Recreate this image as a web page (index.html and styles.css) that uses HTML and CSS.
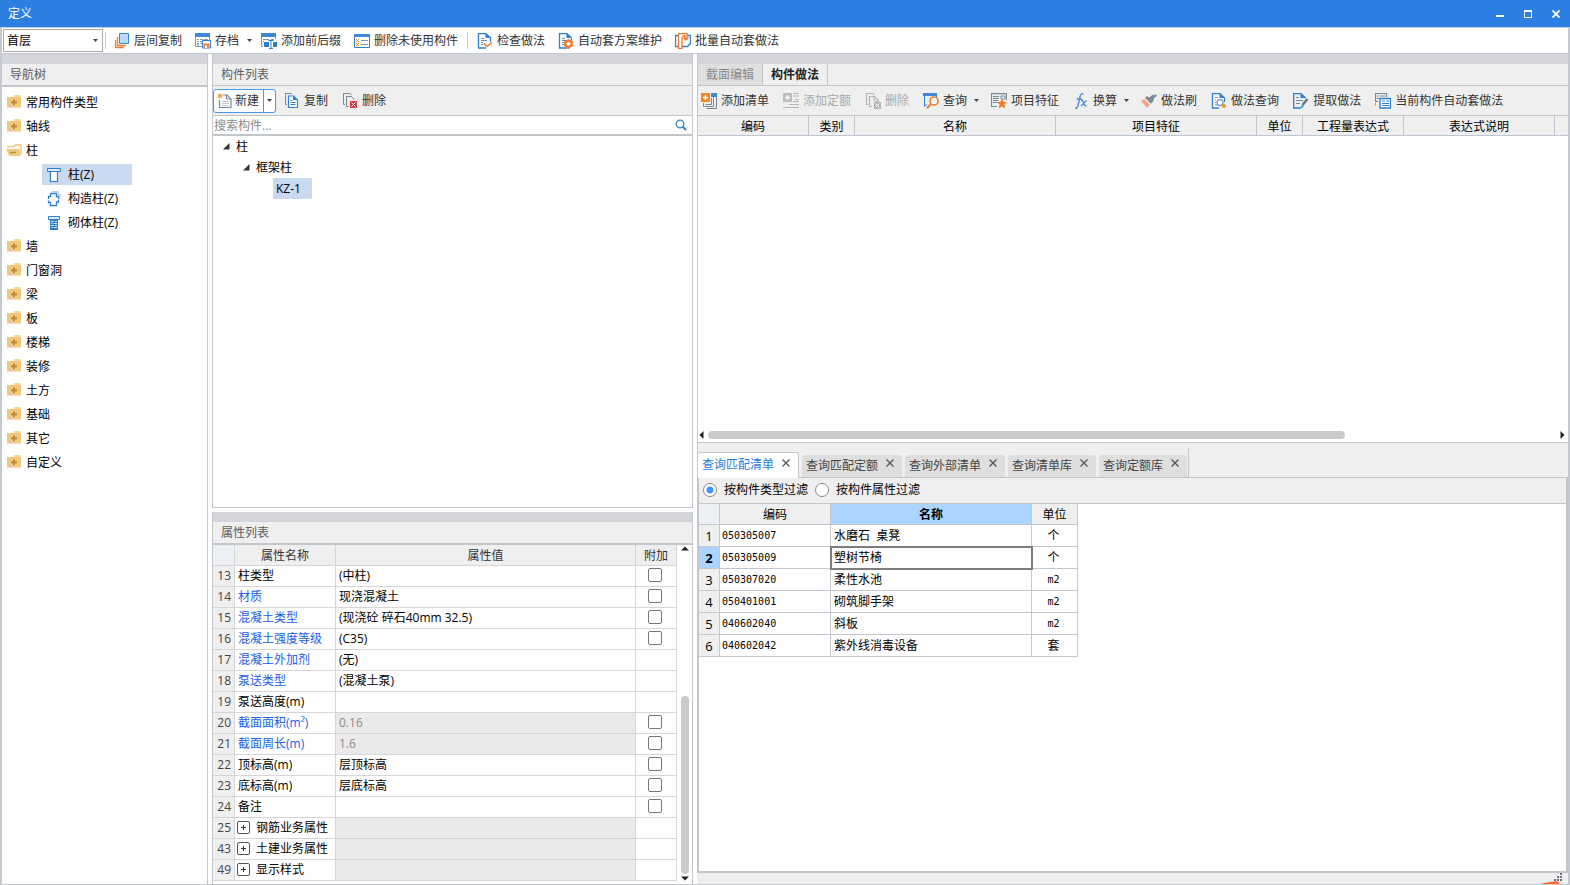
FILE: index.html
```html
<!DOCTYPE html>
<html lang="zh-CN">
<head>
<meta charset="utf-8">
<title>定义</title>
<link rel="stylesheet" href="styles.css">
</head>
<body>
<svg class="defs" aria-hidden="true">
  <symbol id="folder" viewBox="0 2 16 16">
    <path d="M8 3V2.500q0-.5.5-.5H14q.5 0 .5.500V4H8z" fill="#f5d79c"/>
    <path d="M1 4.500q0-.5.5-.5h13q.5 0 .5.500V14q0 .5-.5.500h-13q-.5 0-.5-.500z" fill="#f0c97f"/>
    <path d="M8 6.500v5.500M5 9.200h6" stroke="#c08a2d" stroke-width="2"/>
  </symbol>
  <symbol id="folder-open" viewBox="0 1 16 16">
    <path d="M2 6V4.500h6L9.500 3H15v9" fill="none" stroke="#eec67c" stroke-width="1.400"/>
    <path d="M0 7h13l2 7H3z" fill="#f0c97f"/>
    <path d="M4 10.500h6" stroke="#c08a2d" stroke-width="1.400"/>
  </symbol>
  <symbol id="caret" viewBox="0 0 5 3"><path d="M0 0h5L2.500 3z" fill="#444"/></symbol>
  <symbol id="twisty" viewBox="0 0 7 7"><path d="M6.500 0v6.500H0z" fill="#333"/></symbol>
  <symbol id="close" viewBox="0 0 8 8"><path d="M.5.5l7 7M7.500.5l-7 7" stroke="#555" stroke-width="1.300"/></symbol>
  <symbol id="doc" viewBox="0 0 16 16">
    <path d="M9 15H1.500V.7H9L13.500 5v5" fill="none" stroke="#2f7fd0" stroke-width="1.300"/>
    <path d="M8.500.5V5H14z" fill="#2f7fd0"/>
    <path d="M4 5.500h3M4 7.500h6M4 9.500h5M4 11.500h3" stroke="#7b8794"/>
  </symbol>
</svg>

<div class="window">
  <header class="titlebar">
    <h1>定义</h1>
    <div class="window-buttons">
      <button aria-label="最小化"><svg width="8" height="8"><path d="M0 6h8" stroke="#fff" stroke-width="2"/></svg></button>
      <button aria-label="最大化"><svg width="8" height="8"><path d="M.5 0v7.500h7V0" fill="none" stroke="#fff"/><path d="M0 1h8" stroke="#fff" stroke-width="2"/></svg></button>
      <button aria-label="关闭"><svg width="8" height="8"><path d="M.5.5l7 7M7.500.5l-7 7" stroke="#fff" stroke-width="1.800"/></svg></button>
    </div>
  </header>

  <nav class="toolbar main-toolbar" aria-label="工具栏">
    <div class="floor">
      <select aria-label="楼层"><option>首层</option></select>
      <svg class="floor-caret" width="5" height="3"><use href="#caret"/></svg>
    </div>
    <span class="sep"></span>
    <button class="tool"><svg width="16" height="16"><path d="M3.500 4v8.500H12M1.500 7v7.500H10" fill="none" stroke="#ef7d31" stroke-width="1.300"/><path d="M5.500.5h9v10h-9z" fill="#b9dafc" stroke="#3a86d6"/></svg>层间复制</button>
    <button class="tool split"><svg width="16" height="16"><path d="M.5 2v11.500H7M14.500 3v4" fill="none" stroke="#8595a8"/><path d="M0 0h15v4H0z" fill="#3f88d6"/><path d="M2 6.500h2M5 6.500h3M9 6.500h4M2 8.500h2M5 8.500h2M2 10.500h2M5 10.500h2M2 12h2" stroke="#8595a8"/><path d="M7.500 7.500h8v7.500h-8z" fill="#fff" stroke="#2f7fd0"/><path d="M8.500 10.500h6v4h-6z" fill="#ef7d31"/><path d="M10 12.500h2V15h-2z" fill="#fff"/></svg>存档<svg class="caret" width="5" height="3"><use href="#caret"/></svg></button>
    <button class="tool"><svg width="16" height="16"><path d="M0 0h15v4H0z" fill="#3f88d6"/><path d="M.5 4v9.500H2M14.500 4v2" fill="none" stroke="#8595a8"/><path d="M2 6.500h6M10 6.500h3M2 8.500h1" stroke="#8595a8"/><path d="M3 9h5v5H3zM12 9h4v5h-4z" fill="#2f7fd0"/><path d="M7.500 7.500h5M10 7.500v8M8 15.500h4" stroke="#2f7fd0"/></svg>添加前后缀</button>
    <button class="tool"><svg width="16" height="16"><path d="M.5 1.500h15v13H.5z" fill="#fff" stroke="#2f7fd0"/><path d="M0 1h16v3H0z" fill="#3f88d6"/><path d="M2 6l3 3M5 6L2 9M2 10l3 3M5 10l-3 3" stroke="#f0941f"/><path d="M7 7.500h7M7 11.500h7" stroke="#8595a8"/></svg>删除未使用构件</button>
    <span class="sep"></span>
    <button class="tool"><svg width="16" height="16"><use href="#doc"/><path d="M6 9h8v5H6z" fill="#fff"/><path d="M7 10.500l3 3 5-4" fill="none" stroke="#ef7d31" stroke-width="1.500"/></svg>检查做法</button>
    <button class="tool"><svg width="16" height="16"><use href="#doc"/><circle cx="10.500" cy="10.800" r="3" fill="#fff" stroke="#ef7d31" stroke-width="2.200"/><path d="M10.500 6v1.500M10.500 14v2M6.300 8.500l1.500 1M13.200 12.200l1.600 1M6.300 13.200l1.500-1M13.200 9.400l1.600-1" stroke="#ef7d31" stroke-width="2"/></svg>自动套方案维护</button>
    <button class="tool"><svg width="16" height="16"><path d="M3 2.500H.5v11H3M12 2.500h3.500v8l-3 3H7" fill="none" stroke="#2f7fd0" stroke-width="1.300"/><path d="M6 .5H3.500v15H7V4" fill="#fff" stroke="#ef7d31" stroke-width="1.300"/><path d="M6 .7h6v4M7 3h3v2" fill="none" stroke="#ef7d31" stroke-width="1.300"/><path d="M7.500 4.500h7L11 8z" fill="#ef7d31"/></svg>批量自动套做法</button>
  </nav>

  <main class="workspace">
    <section class="panel nav-panel">
      <h2 class="panel-title">导航树</h2>
      <ul class="nav-tree">
        <li><svg width="16" height="16"><use href="#folder"/></svg>常用构件类型</li>
        <li><svg width="16" height="16"><use href="#folder"/></svg>轴线</li>
        <li><svg width="16" height="16"><use href="#folder-open"/></svg>柱</li>
        <li class="child"><span class="leaf selected"><svg width="16" height="16"><path d="M1.500 1.500h13v3h-13z" fill="#dcebfb" stroke="#2f7fd0"/><path d="M4.500 4.500h7v10h-7z" fill="#fff" stroke="#2f7fd0" stroke-width="1.200"/><path d="M3 4.500h10" stroke="#2f7fd0"/></svg>柱(Z)</span></li>
        <li class="child"><span class="leaf"><svg width="16" height="16"><path d="M6 .7h6v2.800h2v4h-1.500v4" fill="none" stroke="#9cc4ec"/><path d="M4.500 2.500h6v3h2v2M12.500 9v2h-2v3.500h-6V11.500h-2V9.500M2.500 8V5.500h2v-3" fill="none" stroke="#2f7fd0" stroke-width="1.300"/></svg>构造柱(Z)</span></li>
        <li class="child"><span class="leaf"><svg width="16" height="16"><path d="M2.500 1.500h11v3h-11z" fill="#dcebfb" stroke="#2f7fd0"/><path d="M4 4h8v11H4z" fill="#2f7fd0"/><path d="M5 6.500h3M9 6.500h2M5 8.500h1.500M7.500 8.500H11M5 10.500h3M9 10.500h2M5 12.500h1.500M7.500 12.500H11" stroke="#cfe3f8"/></svg>砌体柱(Z)</span></li>
        <li><svg width="16" height="16"><use href="#folder"/></svg>墙</li>
        <li><svg width="16" height="16"><use href="#folder"/></svg>门窗洞</li>
        <li><svg width="16" height="16"><use href="#folder"/></svg>梁</li>
        <li><svg width="16" height="16"><use href="#folder"/></svg>板</li>
        <li><svg width="16" height="16"><use href="#folder"/></svg>楼梯</li>
        <li><svg width="16" height="16"><use href="#folder"/></svg>装修</li>
        <li><svg width="16" height="16"><use href="#folder"/></svg>土方</li>
        <li><svg width="16" height="16"><use href="#folder"/></svg>基础</li>
        <li><svg width="16" height="16"><use href="#folder"/></svg>其它</li>
        <li><svg width="16" height="16"><use href="#folder"/></svg>自定义</li>
      </ul>
    </section>

    <div class="column">
      <section class="panel list-panel">
        <h2 class="panel-title thin">构件列表</h2>
        <div class="toolbar list-toolbar">
          <div class="new-group">
            <button class="new-main"><svg width="16" height="16"><path d="M6 2h4l4 4v8.500H2.500V7" fill="#fff" stroke="#7b8794" stroke-width="1.200"/><path d="M9.500 1.500V6H14" fill="none" stroke="#7b8794"/><path d="M5 8.500h7M5 10.500h7M5 12.500h7" stroke="#c3c8ce"/><path d="M1 1l4 4M5 1L1 5M3 .5v5M.5 3h5" stroke="#f0941f"/></svg>新建</button>
            <button class="new-more" aria-label="更多新建"><svg width="5" height="3"><use href="#caret"/></svg></button>
          </div>
          <button class="tool"><svg width="16" height="16"><path d="M3 11.500H1.500v-11H8" fill="none" stroke="#7b8794"/><path d="M4.500 3h5l4 4v7.500h-9z" fill="#fff" stroke="#2f7fd0" stroke-width="1.200"/><path d="M9 2.500V7h4.500z" fill="#2f7fd0"/><path d="M6.500 7.500h2M6.500 9.500h5M6.500 11.500h5" stroke="#2f7fd0"/></svg>复制</button>
          <button class="tool"><svg width="16" height="16"><path d="M3 11.500H1.500v-11H8l1.500 1.500M6.500 13.500h-2v-10h5l3 3.500" fill="none" stroke="#7b8794"/><path d="M8 8h7v7H8z" fill="#cf4044"/><path d="M9.500 9.500l4 4M13.500 9.500l-4 4" stroke="#fff"/></svg>删除</button>
        </div>
        <div class="search">
          <input type="text" placeholder="搜索构件..." aria-label="搜索构件">
          <button aria-label="搜索"><svg width="12" height="12"><circle cx="5" cy="5" r="3.800" fill="none" stroke="#2b87c4" stroke-width="1.300"/><path d="M7.500 7.500L11 11" stroke="#2b87c4" stroke-width="2"/></svg></button>
        </div>
        <ul class="member-tree">
          <li><svg width="7" height="7"><use href="#twisty"/></svg>柱</li>
          <li class="level2"><svg width="7" height="7"><use href="#twisty"/></svg>框架柱</li>
          <li class="level3"><span class="selected">KZ-1</span></li>
        </ul>
      </section>

      <section class="panel props-panel">
        <h2 class="panel-title">属性列表</h2>
        <div class="props-body">
          <table class="props">
            <colgroup><col class="c-num"><col class="c-name"><col><col class="c-add"></colgroup>
            <thead><tr><th class="corner"></th><th>属性名称</th><th>属性值</th><th>附加</th></tr></thead>
            <tbody>
              <tr><th>13</th><td>柱类型</td><td>(中柱)</td><td class="add"><input type="checkbox" aria-label="附加 柱类型"></td></tr>
              <tr><th>14</th><td class="blue">材质</td><td>现浇混凝土</td><td class="add"><input type="checkbox" aria-label="附加 材质"></td></tr>
              <tr><th>15</th><td class="blue">混凝土类型</td><td>(现浇砼 碎石40mm 32.5)</td><td class="add"><input type="checkbox" aria-label="附加 混凝土类型"></td></tr>
              <tr><th>16</th><td class="blue">混凝土强度等级</td><td>(C35)</td><td class="add"><input type="checkbox" aria-label="附加 混凝土强度等级"></td></tr>
              <tr><th>17</th><td class="blue">混凝土外加剂</td><td>(无)</td><td></td></tr>
              <tr><th>18</th><td class="blue">泵送类型</td><td>(混凝土泵)</td><td></td></tr>
              <tr><th>19</th><td>泵送高度(m)</td><td></td><td></td></tr>
              <tr><th>20</th><td class="blue">截面面积(m²)</td><td class="off">0.16</td><td class="add"><input type="checkbox" aria-label="附加 截面面积"></td></tr>
              <tr><th>21</th><td class="blue">截面周长(m)</td><td class="off">1.6</td><td class="add"><input type="checkbox" aria-label="附加 截面周长"></td></tr>
              <tr><th>22</th><td>顶标高(m)</td><td>层顶标高</td><td class="add"><input type="checkbox" aria-label="附加 顶标高"></td></tr>
              <tr><th>23</th><td>底标高(m)</td><td>层底标高</td><td class="add"><input type="checkbox" aria-label="附加 底标高"></td></tr>
              <tr><th>24</th><td>备注</td><td></td><td class="add"><input type="checkbox" aria-label="附加 备注"></td></tr>
              <tr><th>25</th><td class="group"><button aria-label="展开"><svg width="5" height="5"><path d="M2.500 0v5M0 2.500h5" stroke="#333"/></svg></button>钢筋业务属性</td><td class="off"></td><td></td></tr>
              <tr><th>43</th><td class="group"><button aria-label="展开"><svg width="5" height="5"><path d="M2.500 0v5M0 2.500h5" stroke="#333"/></svg></button>土建业务属性</td><td class="off"></td><td></td></tr>
              <tr><th>49</th><td class="group"><button aria-label="展开"><svg width="5" height="5"><path d="M2.500 0v5M0 2.500h5" stroke="#333"/></svg></button>显示样式</td><td class="off"></td><td></td></tr>
            </tbody>
          </table>
          <div class="vscroll">
            <svg width="8" height="5"><path d="M0 4.500h8L4 .5z" fill="#222"/></svg>
            <span class="track-space"></span><span class="thumb"></span>
            <svg width="8" height="5"><path d="M0 .5h8L4 4.500z" fill="#222"/></svg>
          </div>
        </div>
      </section>
    </div>

    <div class="column right-column">
      <section class="panel practice-panel">
        <div class="view-tabs" role="tablist">
          <button role="tab">截面编辑</button>
          <button role="tab" aria-selected="true" class="active">构件做法</button>
        </div>
        <div class="toolbar practice-toolbar">
          <button class="tool"><svg width="16" height="16"><path d="M10 0h6v4h-6z" fill="#3f88d6"/><path d="M2.500 10v3.500h10V4M5.500 15.500h10V4M4.500 11.500h6V5" fill="none" stroke="#7b8794"/><path d="M0 0h9v9H0z" fill="#f0872f"/><path d="M4.500 2v5M2 4.500h5" stroke="#fff" stroke-width="1.400"/></svg>添加清单</button>
          <button class="tool" disabled><svg width="16" height="16"><path d="M0 0h9v9H0z" fill="#bdbdbd"/><path d="M4.500 2v5M2 4.500h5" stroke="#fff" stroke-width="1.400"/><path d="M10 .5h6M10 3h6M12 6.500h4M10 8.500h6M6 11.500h10M0 14.500h16" stroke="#b5b5b5"/></svg>添加定额</button>
          <button class="tool" disabled><svg width="16" height="16"><path d="M3 11.500H1.500v-11H8l1.500 1.500M7 13.500H4.500v-10h5l4 4v2" fill="none" stroke="#b5b5b5" stroke-width="1.200"/><path d="M9 3v5h5" fill="none" stroke="#b5b5b5"/><path d="M9 9h7v7H9z" fill="#b5b5b5"/><path d="M10.500 10.500l4 4M14.500 10.500l-4 4" stroke="#fff"/></svg>删除</button>
          <button class="tool split"><svg width="16" height="16"><path d="M1.500 3v10.500L4 11M13.500 1v3" fill="none" stroke="#3f88d6"/><path d="M0 0h14v3H0z" fill="#3f88d6"/><circle cx="11" cy="8" r="4" fill="#fff" stroke="#ef7d31" stroke-width="1.600"/><path d="M8 11l-4 4" stroke="#ef7d31" stroke-width="2"/></svg>查询<svg class="caret" width="5" height="3"><use href="#caret"/></svg></button>
          <button class="tool"><svg width="16" height="16"><path d="M6 13.500H.5V.7h15V7" fill="none" stroke="#7b8794" stroke-width="1.200"/><path d="M2 3.500h6M2 5.500h6M2 7.500h5M2 9.500h4M10 3h4v3h-4z" fill="none" stroke="#7b8794"/><path d="M11 5.500l1.600 3.300 3.400.4-2.500 2.400.7 3.900-3.200-1.900-3.200 1.900.7-3.900L6 9.200l3.400-.4z" fill="#ef7d31"/></svg>项目特征</button>
          <button class="tool split"><svg width="16" height="16"><path d="M10.500 1Q8 0 7.200 3L5 12.500Q4 16 2 15M3.500 6H9" fill="none" stroke="#4a8fd8" stroke-width="1.400"/><path d="M8 7.500q1.500-1 2 .5l1.500 4q.5 1.500 2 .5M13.500 7.500L8 13" fill="none" stroke="#4a8fd8" stroke-width="1.300"/></svg>换算<svg class="caret" width="5" height="3"><use href="#caret"/></svg></button>
          <button class="tool"><svg width="16" height="16"><path d="M0 8l3-2 5.500 5.500L6.500 15z" fill="#fba37c"/><path d="M4 5l2-2 2 1.500 4-3 1 1L15 1l1 2-3 2-.5 3-3 3z" fill="#7f8b97"/><path d="M4 5.500l5.500 5.500" stroke="#efefef"/></svg>做法刷</button>
          <button class="tool"><svg width="16" height="16"><path d="M8 15H1.500V.7H9L13.500 5v4" fill="#fff" stroke="#2f7fd0" stroke-width="1.300"/><path d="M8.500.5V5H14z" fill="#2f7fd0"/><path d="M4 4.500h3M4 7h1M4 9.500h1M4 12h3" stroke="#7b8794"/><circle cx="9" cy="9.500" r="3" fill="#fff" stroke="#7d9fc8" stroke-width="1.300"/><path d="M13 10.500l2.500 2.500-2.500 2.500-2.500-2.500z" fill="#f0941f"/></svg>做法查询</button>
          <button class="tool"><svg width="16" height="16"><path d="M8 15H.7V.7H8L12.500 5" fill="none" stroke="#2f7fd0" stroke-width="1.300"/><path d="M7.500.5V5H13z" fill="#2f7fd0"/><path d="M3 4.500h3M3 7.500h7M3 10.500h4" stroke="#7b8794"/><path d="M14.500 6l-5 6" stroke="#6b7783" stroke-width="2.600"/><path d="M9.500 12L7 15l3-1z" fill="#29a9dc" stroke="#29a9dc"/></svg>提取做法</button>
          <button class="tool"><svg width="16" height="16"><path d="M3 8.500H.5v-8h11V4" fill="none" stroke="#7b8794" stroke-width="1.200"/><path d="M2 3h2M5 3h5M2 5.500h2" stroke="#7b8794"/><path d="M.5 10v2.500" stroke="#ef7d31"/><path d="M5 5.500h10.500v9.500H5z" fill="#fff" stroke="#2f7fd0" stroke-width="1.400"/><path d="M7 8h3M11.500 8H14M7 10.500h7M7 12.500h7" stroke="#2f7fd0" stroke-width="1.200"/></svg>当前构件自动套做法</button>
        </div>
        <table class="practice">
          <colgroup><col class="w111"><col class="w46"><col class="w201"><col class="w201"><col class="w46"><col class="w101"><col class="w151"><col></colgroup>
          <thead><tr><th>编码</th><th>类别</th><th>名称</th><th>项目特征</th><th>单位</th><th>工程量表达式</th><th>表达式说明</th><th></th></tr></thead>
        </table>
        <div class="hscroll">
          <svg width="5" height="8"><path d="M4.500 0v8L.5 4z" fill="#222"/></svg>
          <span class="thumb"></span><span class="track-space"></span>
          <svg width="5" height="8"><path d="M.5 0v8l4-4z" fill="#222"/></svg>
        </div>
      </section>

      <section class="query-panel">
        <div class="query-tabs">
          <div class="tab active"><button>查询匹配清单</button><button aria-label="关闭 查询匹配清单" class="x"><svg width="8" height="8"><use href="#close"/></svg></button></div>
          <div class="tab"><button>查询匹配定额</button><button aria-label="关闭 查询匹配定额" class="x"><svg width="8" height="8"><use href="#close"/></svg></button></div>
          <div class="tab"><button>查询外部清单</button><button aria-label="关闭 查询外部清单" class="x"><svg width="8" height="8"><use href="#close"/></svg></button></div>
          <div class="tab"><button>查询清单库</button><button aria-label="关闭 查询清单库" class="x"><svg width="8" height="8"><use href="#close"/></svg></button></div>
          <div class="tab"><button>查询定额库</button><button aria-label="关闭 查询定额库" class="x"><svg width="8" height="8"><use href="#close"/></svg></button></div>
          <span class="tabs-end"></span>
        </div>
        <div class="query-body">
          <div class="filters">
            <label><input type="radio" name="filter" checked>按构件类型过滤</label>
            <label><input type="radio" name="filter">按构件属性过滤</label>
          </div>
          <table class="results">
            <colgroup><col class="w21"><col class="w111"><col class="w201"><col class="w46"></colgroup>
            <thead><tr><th class="corner"></th><th>编码</th><th class="current">名称</th><th>单位</th></tr></thead>
            <tbody>
              <tr><th>1</th><td class="code">050305007</td><td>水磨石&nbsp; 桌凳</td><td class="unit">个</td></tr>
              <tr class="current"><th>2</th><td class="code">050305009</td><td class="focus">塑树节椅</td><td class="unit">个</td></tr>
              <tr><th>3</th><td class="code">050307020</td><td>柔性水池</td><td class="unit mono">m2</td></tr>
              <tr><th>4</th><td class="code">050401001</td><td>砌筑脚手架</td><td class="unit mono">m2</td></tr>
              <tr><th>5</th><td class="code">040602040</td><td>斜板</td><td class="unit mono">m2</td></tr>
              <tr><th>6</th><td class="code">040602042</td><td>紫外线消毒设备</td><td class="unit">套</td></tr>
            </tbody>
          </table>
        </div>
        <footer class="status">
          <svg class="grip" width="28" height="11"><path d="M20 0h2v2h-2zM17 3h2v2h-2zM20 3h2v2h-2zM14 6h2v2h-2zM17 6h2v2h-2zM20 6h2v2h-2z" fill="#6d7580"/><path d="M0 11q8-2 17-3l3 3z" fill="#ff6a33"/></svg>
        </footer>
      </section>
    </div>
  </main>
</div>
</body>
</html>
```

FILE: styles.css
```css
* { box-sizing: border-box; }

body {
  margin: 0;
  background: #fff;
  color: #000;
  font-family: "Open Sans", "Noto Sans CJK SC", sans-serif;
  font-size: 12px;
  line-height: 20px;
}

h1, h2, ul { margin: 0; padding: 0; list-style: none; font-size: 12px; font-weight: normal; }
svg { display: block; flex: none; }
button, input, select { font: inherit; color: inherit; margin: 0; padding: 0; border: 0; background: none; }
button { display: flex; align-items: center; white-space: nowrap; }
.defs { position: absolute; width: 0; height: 0; }

.window { display: flex; flex-direction: column; min-height: 100vh; }

/* title bar */
.titlebar {
  display: flex;
  justify-content: space-between;
  height: 28px;
  padding-left: 8px;
  background: #2c7fe1;
  border-bottom: 1px solid #bcd0ea;
  color: #fff;
}
.titlebar h1 { line-height: 27px; }
.window-buttons { display: flex; }
.window-buttons button { width: 28px; justify-content: center; }

/* toolbars */
.toolbar { display: flex; align-items: center; color: #333; }
.main-toolbar {
  gap: 1px;
  height: 26px;
  padding-left: 1px;
  border: solid #c4c8d0;
  border-width: 0 2px 1px;
}
.tool { gap: 4px; padding: 0 6px; line-height: 22px; }
.tool:disabled { color: #a9a9a9; }
.tool.split { padding-right: 2px; }
.tool .caret { margin: 0 0 0 4px; }
.sep { width: 1px; height: 17px; margin: 0 2px; background: #c9c9c9; }
.floor + .sep { margin: 0 1px; }
.floor { position: relative; width: 100px; }
.floor select {
  display: block;
  width: 100%;
  height: 23px;
  padding-left: 3px;
  border: 1px solid #a9a9a9;
  background: #fff;
  color: #000;
  appearance: none;
}
.floor-caret { position: absolute; right: 5px; top: 10px; }

/* panels */
.workspace {
  flex: 1;
  display: grid;
  grid-template-columns: 206px 481px 1fr;
  gap: 4px;
  border: solid #c4c8d0;
  border-width: 0 2px 1px;
}
.column { display: flex; flex-direction: column; gap: 4px; min-width: 0; }
.panel {
  display: flex;
  flex-direction: column;
  min-width: 0;
  border: solid #c3c6cb;
  border-width: 0 1px;
}
.panel::before { content: ""; height: 10px; background: #d4d5da; }
.panel-title {
  height: 23px;
  padding-left: 8px;
  background: #efefef;
  border-bottom: 2px solid #c3c6cb;
  color: #5c5c5c;
  line-height: 22px;
}
.panel-title.thin { height: 22px; border-bottom-width: 1px; }
.nav-panel { border-left: 0; }

.selected { background: #c9d9f0; }

/* navigation tree */
.nav-tree { padding-top: 4px; }
.nav-tree li { display: flex; align-items: center; gap: 4px; height: 24px; padding-left: 4px; }
.nav-tree .child { align-items: flex-start; padding: 1px 0 0 40px; }
.leaf { display: flex; align-items: center; gap: 6px; width: 90px; height: 21px; padding-left: 4px; line-height: 21px; }

/* member list */
.list-panel { flex: 1; border-bottom-width: 1px; }
.list-toolbar { gap: 2px; height: 30px; background: #efefef; border-bottom: 1px solid #c3c6cb; }
.new-group { display: flex; height: 24px; border: 1px solid #4a98ea; border-radius: 3px; background: #fff; }
.new-main { gap: 2px; padding: 0 4px 0 3px; }
.new-more { width: 12px; justify-content: center; border-left: 1px solid #4a98ea; }
.search { display: flex; height: 20px; border-bottom: 2px solid #c3c6cb; }
.search input { flex: 1; min-width: 0; padding: 2px 0 0 1px; outline: 0; }
.search input::placeholder { color: #8a8a8a; }
.search button { padding: 0 5px; }
.member-tree li { display: flex; align-items: center; gap: 6px; height: 21px; padding-left: 10px; }
.member-tree .level2 { padding-left: 30px; }
.member-tree .level3 { padding-left: 60px; }
.member-tree .selected { width: 39px; padding-left: 3px; line-height: 21px; }

/* tables */
table { border-collapse: separate; border-spacing: 0; table-layout: fixed; }
th, td { padding: 0; overflow: hidden; white-space: nowrap; font-weight: normal; text-align: left; }
thead th { background: #efefef; text-align: center; }
thead .corner { background: #edf1f6; }

.props-body { display: flex; padding-bottom: 3px; }
.props { flex: 1; min-width: 0; }
.c-num { width: 22px; }
.c-name { width: 101px; }
.c-add { width: 41px; }
.props th, .props td { height: 21px; border: solid #d6d6d6; border-width: 0 1px 1px 0; color: #333; }
.props thead th { padding-top: 2px; line-height: 18px; }
.props td { padding-left: 3px; color: #000; }
.props tbody th { padding-right: 3px; background: #efefef; text-align: right; color: #444; }
.props .blue { color: #1a5cf0; }
.props .off { background: #eaeaea; color: #8c8c8c; }
.props .add { padding: 0 0 2px 12px; }
.props input {
  display: block;
  width: 14px;
  height: 14px;
  border: 1px solid #777;
  border-radius: 2px;
  background: #fff;
  appearance: none;
}
.props .group { padding-left: 2px; }
.props .group button {
  display: inline-flex;
  justify-content: center;
  width: 13px;
  height: 13px;
  margin: 0 6px 2px 0;
  border: 1px solid #555;
  border-radius: 2px;
  vertical-align: middle;
}

.vscroll { display: flex; flex-direction: column; align-items: center; width: 15px; padding: 1px 0 0; }
.vscroll .track-space { flex: 145; }
.vscroll .thumb { flex: 177; width: 8px; margin-bottom: 2px; }
.thumb { border-radius: 4px; background: #cbcbcb; }

/* practice panel */
.practice-panel { flex: 388 1 0; border-width: 0 0 1px 1px; }
.right-column { gap: 0; }
.view-tabs { display: flex; height: 22px; background: #efefef; border-bottom: 1px solid #c3c6cb; }
.view-tabs button { padding: 0 8px; border-right: 1px solid #c3c6cb; background: #dfdfdf; color: #888; line-height: 21px; }
.view-tabs .active { background: #efefef; color: #222; font-weight: bold; }
.practice-toolbar { height: 30px; padding-left: 3px; background: #efefef; border-bottom: 1px solid #c3c6cb; overflow: hidden; }
.practice-toolbar .tool { padding: 0 7px; }
.practice-toolbar .tool:first-child { padding-left: 0; }
.practice-toolbar .tool.split { padding-right: 5px; }
.practice-toolbar .caret { margin-left: 3px; }
.practice { width: 100%; }
.practice th { height: 20px; padding-top: 2px; border: solid #bfc5d2; border-width: 0 1px 1px 0; line-height: 17px; }
.practice th:last-child { border-right: 0; }
.w21 { width: 21px; }
.w46 { width: 46px; }
.w101 { width: 101px; }
.w111 { width: 111px; }
.w151 { width: 151px; }
.w201 { width: 201px; }
.hscroll { display: flex; align-items: center; gap: 4px; margin-top: auto; padding: 3px 3px 3px 1px; }
.hscroll .thumb { flex: 639; height: 8px; }
.hscroll .track-space { flex: 207; }

/* query panel */
.query-panel { flex: 442 1 0; display: flex; flex-direction: column; background: #efefef; }
.query-tabs {
  display: flex;
  align-items: flex-end;
  gap: 3px;
  height: 35px;
  border-bottom: 1px solid #c3c6cb;
  border-left: 1px solid #c3c6cb;
}
.tab {
  display: flex;
  gap: 8px;
  height: 22px;
  padding: 0 8px 0 4px;
  border-radius: 3px 3px 0 0;
  background: #dedede;
  color: #444;
}
.tab .x { height: 17px; }
.tab.active { height: 26px; margin-bottom: -1px; border: 1px solid #c3c6cb; border-width: 1px 1px 0 0; background: #fff; color: #1e7be0; }
.tab.active .x { height: 21px; }
.tabs-end { width: 1px; height: 29px; margin-left: -2px; background: #c3c6cb; }
.query-body { flex: 1; border: 2px solid #c3c6cb; border-top: 0; background: #fff; }
.filters { display: flex; gap: 7px; height: 26px; padding-left: 4px; background: #efefef; border-bottom: 1px solid #c3c6cb; }
.filters label { display: flex; align-items: center; gap: 7px; }
.filters input { width: 14px; height: 14px; border: 1px solid #888; border-radius: 50%; background: #fff; appearance: none; }
.filters input:checked { background: radial-gradient(circle, #3d97f5 3px, #fff 4px); }
.results { width: 379px; }
.results th, .results td { height: 22px; border: solid #c3c8d0; border-width: 0 1px 1px 0; line-height: 21px; }
.results thead th { height: 21px; padding-top: 2px; line-height: 18px; }
.results tbody th { padding-top: 2px; background: #efefef; text-align: center; line-height: 19px; font-size: 13px; }
.results td { padding-left: 3px; }
.results thead .current, .results .current th { background: #abd5ff; font-weight: bold; }
.results .focus { outline: 2px solid #7d7d7d; outline-offset: -1px; }
.results .code { padding-left: 2px; font-family: "DejaVu Sans Mono", monospace; font-size: 10px; }
.results .unit { padding: 0 2px 0 0; text-align: center; }
.results .mono { font-family: "DejaVu Sans Mono", monospace; font-size: 10px; }
.status { display: flex; justify-content: flex-end; height: 11px; }
```
